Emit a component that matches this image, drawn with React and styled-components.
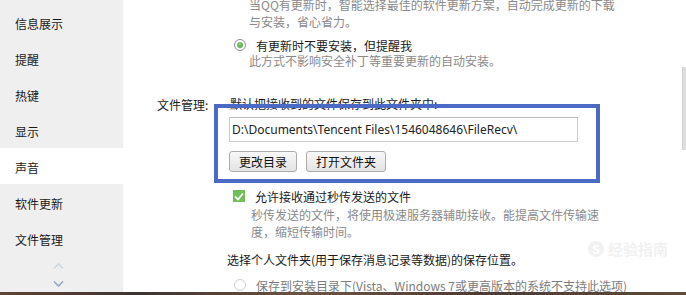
import React from "react";
import styled, { createGlobalStyle } from "styled-components";

const GlobalStyle = createGlobalStyle`
  html, body { margin: 0; padding: 0; background: #fff; }
  body {
    font-family: "Noto Sans CJK SC", "Noto Sans", sans-serif;
    overflow: hidden;
  }
`;

const Page = styled.div`
  position: relative;
  width: 686px;
  height: 295px;
  overflow: hidden;
  display: flex;
  flex-direction: column;
`;

const Main = styled.div`
  display: flex;
  height: 292px;
`;

const Strip = styled.div`
  height: 3px;
  background: linear-gradient(90deg, #5a463a 0%, #3e3430 20%, #6a5446 45%, #4a3c34 70%, #5e4a3e 100%);
`;

const Sidebar = styled.nav`
  width: 123px;
  flex-shrink: 0;
  background: #efefef;
  padding-top: 4px;
  box-sizing: border-box;
  display: flex;
  flex-direction: column;
`;

const NavItem = styled.div`
  height: 36px;
  box-sizing: border-box;
  padding: 4px 0 0 15px;
  line-height: 32px;
  font-size: 12px;
  color: #1a1a1a;
  background: ${(p) => (p.$active ? "#ffffff" : "transparent")};
`;

const Arrows = styled.div`
  display: flex;
  flex-direction: column;
  margin: 7px 0 0 53px;
  gap: 12px;
`;

const Content = styled.div`
  flex: 1;
  overflow: hidden;
  font-size: 12px;
  color: #1a1a1a;
`;

const Scrolled = styled.div`
  margin-top: -4px;
`;

const Desc = styled.p`
  margin: ${(p) => p.$mt || 0}px 0 0 0;
  padding-left: ${(p) => p.$indent || 0}px;
  line-height: 17px;
  color: #8a8a8a;
`;

const OptionRow = styled.div`
  display: flex;
  align-items: center;
  gap: 10px;
  height: 18px;
  margin-top: ${(p) => p.$mt || 0}px;
  padding-left: ${(p) => p.$indent || 0}px;
  color: ${(p) => (p.$disabled ? "#7c7c7c" : "#1a1a1a")};
`;

const Radio = styled.span`
  width: 12px;
  height: 12px;
  box-sizing: border-box;
  border-radius: 50%;
  border: 1px solid ${(p) => (p.$checked ? "#8f8f8f" : "#cfcfcf")};
  background: #fff;
  display: flex;
  align-items: center;
  justify-content: center;
  flex-shrink: 0;
  &::after {
    content: "";
    display: ${(p) => (p.$checked ? "block" : "none")};
    width: 6px;
    height: 6px;
    border-radius: 50%;
    background: radial-gradient(circle at 40% 35%, #8fd07a, #3f9a34);
  }
`;

const Check = styled.span`
  width: 12px;
  height: 12px;
  background: #6fbf56;
  display: flex;
  align-items: center;
  justify-content: center;
  flex-shrink: 0;
`;

const FileSection = styled.section`
  display: grid;
  grid-template-columns: 73px 1fr;
  padding-left: 34px;
  margin-top: 26px;
`;

const FieldLabel = styled.div`
  line-height: 17px;
  padding-top: 1px;
`;

const FieldBody = styled.div`
  display: flex;
  flex-direction: column;
`;

const Heading = styled.div`
  line-height: 17px;
  margin: ${(p) => p.$mt || 0}px 0 0 ${(p) => p.$ml || 0}px;
`;

const PathInput = styled.input`
  width: 349px;
  height: 25px;
  box-sizing: border-box;
  margin: 5px 0 0 -1px;
  border: 1px solid #cdcdcd;
  border-top-color: #bdbdbd;
  padding: 0 2px;
  font-family: "Noto Sans", sans-serif;
  font-size: 12px;
  color: #222;
  outline: none;
  background: #fff;
`;

const ButtonRow = styled.div`
  display: flex;
  gap: 9px;
  margin: 9px 0 0 -1px;
`;

const Button = styled.button`
  height: 21px;
  padding: 0 9px;
  border: 1px solid #acacac;
  border-radius: 3px;
  background: linear-gradient(#f8f8f8, #e4e4e4);
  font-family: "Noto Sans CJK SC", sans-serif;
  font-size: 12px;
  line-height: 19px;
  color: #111;
`;

const Highlight = styled.div`
  position: absolute;
  left: 214px;
  top: 104px;
  width: 386px;
  height: 79px;
  box-sizing: border-box;
  border: 4px solid #4a6ac6;
  pointer-events: none;
`;

const Watermark = styled.div`
  position: absolute;
  left: 588px;
  top: 238px;
  display: flex;
  align-items: center;
  gap: 4px;
  color: #f1f1f1;
  font-size: 15px;
  font-weight: 700;
`;

const WmBadge = styled.span`
  width: 16px;
  height: 16px;
  border-radius: 50%;
  background: #f1f1f1;
  color: #fff;
  font-size: 12px;
  line-height: 16px;
  text-align: center;
`;

const ScrollTrack = styled.div`
  width: 4px;
  flex-shrink: 0;
`;

const Thumb = styled.div`
  margin-top: 67px;
  height: 83px;
  background: #dedede;
  border-left: 1px solid #cfcfcf;
  box-sizing: border-box;
`;

const navItems = ["信息展示", "提醒", "热键", "显示", "声音", "软件更新", "文件管理"];

const Chevron = ({ up, color }) => (
  <svg width="11" height="6" viewBox="0 0 11 6">
    <path
      d={up ? "M1 5.5 L5.5 1 L10 5.5" : "M1 0.5 L5.5 5 L10 0.5"}
      fill="none"
      stroke={color}
      strokeWidth="1.6"
    />
  </svg>
);

export default function App() {
  return (
    <>
      <GlobalStyle />
      <Page>
        <Main>
          <Sidebar>
            {navItems.map((n) => (
              <NavItem key={n} $active={n === "声音"}>
                {n}
              </NavItem>
            ))}
            <Arrows>
              <Chevron up color="#cfd6df" />
              <Chevron color="#93a9c2" />
            </Arrows>
          </Sidebar>
          <Content>
            <Scrolled>
              <Desc $indent={126}>
                当QQ有更新时，智能选择最佳的软件更新方案，自动完成更新的下载
                <br />
                与安装，省心省力。
              </Desc>
              <OptionRow $indent={111} $mt={6}>
                <Radio $checked />
                <span>有更新时不要安装，但提醒我</span>
              </OptionRow>
              <Desc $indent={126} $mt={-2}>
                此方式不影响安全补丁等重要更新的自动安装。
              </Desc>
              <FileSection>
                <FieldLabel>文件管理:</FieldLabel>
                <FieldBody>
                  <Heading>默认把接收到的文件保存到此文件夹中:</Heading>
                  <PathInput readOnly value={"D:\\Documents\\Tencent Files\\1546048646\\FileRecv\\"} />
                  <ButtonRow>
                    <Button>更改目录</Button>
                    <Button>打开文件夹</Button>
                  </ButtonRow>
                  <OptionRow $indent={3} $mt={15}>
                    <Check>
                      <svg width="10" height="9" viewBox="0 0 10 9">
                        <path d="M1 4.5 L4 7.5 L9 1.5" fill="none" stroke="#fff" strokeWidth="1.8" />
                      </svg>
                    </Check>
                    <span>允许接收通过秒传发送的文件</span>
                  </OptionRow>
                  <Desc $indent={21} $mt={1}>
                    秒传发送的文件，将使用极速服务器辅助接收。能提高文件传输速
                    <br />
                    度，缩短传输时间。
                  </Desc>
                  <Heading $mt={11} $ml={-3}>
                    选择个人文件夹(用于保存消息记录等数据)的保存位置。
                  </Heading>
                  <OptionRow $indent={4} $mt={8} $disabled>
                    <Radio />
                    <span>保存到安装目录下(Vista、Windows 7或更高版本的系统不支持此选项)</span>
                  </OptionRow>
                </FieldBody>
              </FileSection>
            </Scrolled>
          </Content>
          <ScrollTrack>
            <Thumb />
          </ScrollTrack>
        </Main>
        <Strip />
        <Highlight />
        <Watermark>
          <WmBadge>S</WmBadge>
          <span>经验指南</span>
        </Watermark>
      </Page>
    </>
  );
}
